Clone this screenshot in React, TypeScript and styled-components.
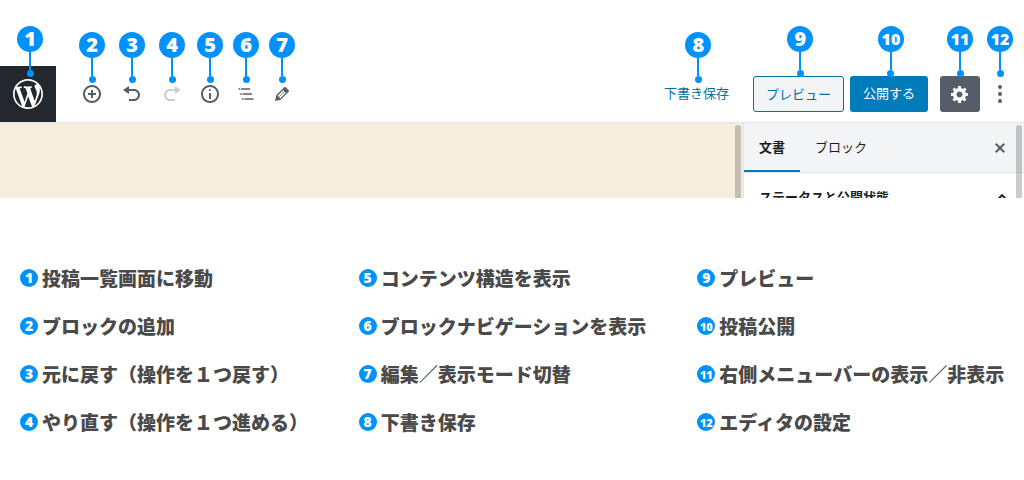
import React from "react";
import styled, { createGlobalStyle, css } from "styled-components";

const color = {
  pin: "#0092fa",
  ink: "#4a4a4a",
  dark: "#23282e",
  icon: "#555d66",
  line: "#e2e4e7",
  link: "#0071a1",
  primary: "#007cba",
  canvas: "#f5eedf",
  panel: "#f3f4f6",
};

const GlobalStyle = createGlobalStyle`
  *, *::before, *::after { box-sizing: border-box; }
  body {
    margin: 0;
    background: #fff;
    color: #191e23;
    font-family: "Noto Sans CJK JP", sans-serif;
    font-size: 13px;
  }
  button {
    margin: 0;
    padding: 0;
    border: 0;
    background: none;
    color: inherit;
    font: inherit;
    cursor: pointer;
  }
`;

const Editor = styled.section`
  padding-top: 66px;
`;

const Toolbar = styled.header`
  display: flex;
  align-items: center;
  height: 57px;
  padding-right: 4px;
  border-bottom: 1px solid ${color.line};
`;

const Tools = styled.div`
  display: flex;
  padding-left: 16px;
`;

const Actions = styled.div`
  display: flex;
  gap: 6px;
  margin-left: auto;
`;

const Settings = styled.div`
  display: flex;
  margin-left: 12px;
`;

const Marked = styled.div`
  position: relative;
  display: flex;
`;

const Pin = styled.span<{ $top: number; $wide?: boolean }>`
  position: absolute;
  z-index: 1;
  top: ${(p) => p.$top}px;
  left: calc(50% + ${(p) => (p.$wide ? 2 : 0)}px);
  transform: translateX(-50%);
  display: flex;
  flex-direction: column;
  align-items: center;
  pointer-events: none;
`;

const Stem = styled.span`
  width: 2px;
  height: 18px;
  background: ${color.pin};
`;

const Dot = styled.span`
  width: 7px;
  height: 7px;
  border-radius: 50%;
  background: ${color.pin};
`;

const Disc = styled.span<{ $size: number; $font: number }>`
  display: flex;
  flex: none;
  align-items: center;
  justify-content: center;
  width: ${(p) => p.$size}px;
  height: ${(p) => p.$size}px;
  border-radius: 50%;
  background: ${color.pin};
  color: #fff;
  font-family: "Open Sans", sans-serif;
  font-size: ${(p) => p.$font}px;
  font-weight: 800;
  line-height: 1;
`;

const HomeButton = styled.button`
  display: flex;
  align-items: center;
  justify-content: center;
  width: 56px;
  height: 56px;
  background: ${color.dark};
  color: #fff;
`;

const ToolButton = styled.button<{ $width: number; $solid?: boolean }>`
  display: flex;
  align-items: center;
  justify-content: center;
  width: ${(p) => p.$width}px;
  height: 36px;
  border-radius: 3px;
  color: ${(p) => (p.$solid ? "#fff" : color.icon)};
  background: ${(p) => (p.$solid ? color.icon : "transparent")};
  &:disabled {
    color: #cbcdd0;
  }
`;

const TextButton = styled.button<{ $kind: "link" | "outline" | "primary" }>`
  height: 36px;
  border-radius: 3px;
  line-height: 20px;
  white-space: nowrap;
  ${(p) =>
    p.$kind === "link" &&
    css`
      padding: 0 18px 2px;
      color: ${color.link};
    `}
  ${(p) =>
    p.$kind === "outline" &&
    css`
      padding: 0 12px;
      border: 1px solid ${color.link};
      background: ${color.panel};
      color: ${color.link};
    `}
  ${(p) =>
    p.$kind === "primary" &&
    css`
      padding: 0 13px 2px;
      background: ${color.primary};
      color: #fff;
    `}
`;

const Workspace = styled.div`
  display: flex;
  height: 75px;
  overflow: hidden;
`;

const Canvas = styled.main`
  display: flex;
  flex: 1;
  justify-content: flex-end;
  padding: 2px 2px 0 0;
  background: ${color.canvas};
`;

const Thumb = styled.span`
  width: 6px;
  border-radius: 3px 3px 0 0;
  background: #c4bfb2;
`;

const Sidebar = styled.aside`
  position: relative;
  width: 281px;
  border-left: 1px solid ${color.line};
  background: #fff;
`;

const SidebarThumb = styled.span`
  position: absolute;
  top: 2px;
  right: 2px;
  bottom: 0;
  width: 6px;
  border-radius: 3px 3px 0 0;
  background: rgba(0, 0, 0, 0.2);
`;

const Tabs = styled.div`
  display: flex;
  height: 50px;
  padding-right: 14px;
  border-bottom: 1px solid ${color.line};
  background: ${color.panel};
`;

const Tab = styled.button<{ $active?: boolean }>`
  height: 49px;
  padding: 0 15px 2px;
  font-weight: ${(p) => (p.$active ? 700 : 400)};
  box-shadow: ${(p) => (p.$active ? `inset 0 -2px ${color.primary}` : "none")};
`;

const CloseButton = styled.button`
  display: flex;
  align-items: center;
  margin-left: auto;
  color: ${color.icon};
`;

const PanelToggle = styled.button`
  display: flex;
  align-items: center;
  justify-content: space-between;
  width: 100%;
  padding: 14px 12px 14px 15px;
  font-weight: 700;
  line-height: 20px;
`;

const Legend = styled.ol`
  display: grid;
  grid-template-columns: repeat(3, 1fr);
  grid-template-rows: repeat(4, 28px);
  grid-auto-flow: column;
  gap: 20px;
  margin: 0;
  padding: 66px 8px 42px 20px;
  list-style: none;
`;

const LegendItem = styled.li`
  display: flex;
  align-items: center;
  gap: 4px;
  color: ${color.ink};
  font-size: 19px;
  font-weight: 900;
  line-height: 28px;
  white-space: nowrap;
`;

const icons = {
  wordpress:
    "M20 10c0-5.51-4.49-10-10-10C4.48 0 0 4.49 0 10c0 5.52 4.48 10 10 10 5.51 0 10-4.48 10-10zM7.78 15.37L4.37 6.22c.55-.02 1.17-.08 1.17-.08.5-.06.44-1.13-.06-1.11 0 0-1.45.11-2.37.11-.18 0-.37 0-.58-.01C4.12 2.69 6.87 1.11 10 1.11c2.33 0 4.45.87 6.05 2.34-.68-.11-1.65.39-1.65 1.58 0 .74.45 1.36.9 2.1.35.61.55 1.36.55 2.46 0 1.49-1.4 5-1.4 5l-3.03-8.37c.54-.02.82-.17.82-.17.5-.05.44-1.25-.06-1.22 0 0-1.44.12-2.38.12-.87 0-2.33-.12-2.33-.12-.5-.03-.56 1.2-.06 1.22l.92.08 1.26 3.41zM17.41 10c.24-.64.74-1.87.43-4.25.7 1.29 1.05 2.71 1.05 4.25 0 3.29-1.73 6.24-4.4 7.78.97-2.59 1.94-5.2 2.92-7.78zM6.1 18.09C3.12 16.65 1.11 13.53 1.11 10c0-1.3.23-2.48.72-3.59C3.25 10.3 4.67 14.2 6.1 18.09zm4.03-6.63l2.58 6.98c-.86.29-1.76.45-2.71.45-.79 0-1.57-.11-2.29-.33.81-2.38 1.62-4.74 2.42-7.1z",
  insert:
    "M10 1c-5 0-9 4-9 9s4 9 9 9 9-4 9-9-4-9-9-9zm0 16c-3.9 0-7-3.1-7-7s3.1-7 7-7 7 3.1 7 7-3.1 7-7 7zm1-11H9v3H6v2h3v3h2v-3h3V9h-3V6z",
  undo: "M12 5H7V2L1 6l6 4V7h5c2.2 0 4 1.8 4 4s-1.8 4-4 4H7v2h5c3.3 0 6-2.7 6-6s-2.7-6-6-6z",
  redo: "M8 5h5V2l6 4-6 4V7H8c-2.2 0-4 1.8-4 4s1.8 4 4 4h5v2H8c-3.3 0-6-2.7-6-6s2.7-6 6-6z",
  info: "M9 15h2V9H9v6zm1-10c-.5 0-1 .5-1 1s.5 1 1 1 1-.5 1-1-.5-1-1-1zm0-4c-5 0-9 4-9 9s4 9 9 9 9-4 9-9-4-9-9-9zm0 16c-3.9 0-7-3.1-7-7s3.1-7 7-7 7 3.1 7 7-3.1 7-7 7z",
  outline: "M5 5H3v2h2V5zm3 8h11v-2H8v2zm9-8H6v2h11V5zM7 11H5v2h2v-2zm0 8h2v-2H7v2zm3-2v2h11v-2H10z",
  edit: "M13.89 3.39l2.71 2.72c.46.46.42 1.24.03 1.64l-8.01 8.02-5.56 1.16 1.16-5.58s7.6-7.63 7.99-8.03c.39-.39 1.22-.39 1.68.07zm-2.73 2.79l-5.59 5.61 1.11 1.11 5.54-5.65zm-2.97 8.23l5.58-5.6-1.07-1.08-5.59 5.6z",
  gear: "M18 12h-2.18c-.17.7-.44 1.35-.81 1.93l1.54 1.54-2.1 2.1-1.54-1.54c-.58.36-1.23.63-1.91.79V19H8v-2.18c-.68-.16-1.33-.43-1.91-.79l-1.54 1.54-2.12-2.12 1.54-1.54c-.36-.58-.63-1.23-.79-1.91H1V9.03h2.17c.16-.7.44-1.35.8-1.94L2.43 5.55l2.1-2.1 1.54 1.54c.58-.37 1.24-.64 1.93-.81V2h3v2.18c.68.16 1.33.43 1.91.79l1.54-1.54 2.12 2.12-1.54 1.54c.36.59.64 1.24.8 1.94H18V12zm-8.5 1.5c1.66 0 3-1.34 3-3s-1.34-3-3-3-3 1.34-3 3 1.34 3 3 3z",
  more: "M10 1a2 2 0 1 0 0 4 2 2 0 0 0 0-4zm0 7a2 2 0 1 0 0 4 2 2 0 0 0 0-4zm0 7a2 2 0 1 0 0 4 2 2 0 0 0 0-4z",
  close:
    "M14.95 6.46L11.41 10l3.54 3.54-1.41 1.41L10 11.42l-3.53 3.53-1.42-1.42L8.58 10 5.05 6.47l1.42-1.42L10 8.58l3.54-3.53z",
  chevron: "M10 6.8l-4.6 4.6L6.8 12.8 10 9.6l3.2 3.2 1.4-1.4z",
};

function Icon({ name, box = 20, size = 20 }: { name: keyof typeof icons; box?: number; size?: number }) {
  return (
    <svg width={size} height={size} viewBox={`0 0 ${box} ${box}`} fill="currentColor" aria-hidden="true">
      <path d={icons[name]} />
    </svg>
  );
}

function Marker({ n, top, wide }: { n: number; top: number; wide?: boolean }) {
  return (
    <Pin $top={top} $wide={wide}>
      <Disc $size={26} $font={n > 9 ? 16 : 20}>
        {n}
      </Disc>
      <Stem />
      <Dot />
    </Pin>
  );
}

const tools: { name: keyof typeof icons; label: string; width: number; box?: number; disabled?: boolean }[] = [
  { name: "insert", label: "ブロックの追加", width: 40 },
  { name: "undo", label: "元に戻す", width: 40 },
  { name: "redo", label: "やり直す", width: 40, disabled: true },
  { name: "info", label: "コンテンツ構造", width: 36 },
  { name: "outline", label: "ブロックナビゲーション", width: 36, box: 24 },
  { name: "edit", label: "モード切替", width: 36 },
];

const legend = [
  "投稿一覧画面に移動",
  "ブロックの追加",
  "元に戻す（操作を１つ戻す）",
  "やり直す（操作を１つ進める）",
  "コンテンツ構造を表示",
  "ブロックナビゲーションを表示",
  "編集／表示モード切替",
  "下書き保存",
  "プレビュー",
  "投稿公開",
  "右側メニューバーの表示／非表示",
  "エディタの設定",
];

export default function App() {
  return (
    <>
      <GlobalStyle />
      <Editor lang="ja">
        <Toolbar>
          <Marked>
            <HomeButton aria-label="投稿一覧">
              <Icon name="wordpress" size={30} />
            </HomeButton>
            <Marker n={1} top={-40} wide />
          </Marked>
          <Tools>
            {tools.map((t, i) => (
              <Marked key={t.name}>
                <ToolButton $width={t.width} aria-label={t.label} disabled={t.disabled}>
                  <Icon name={t.name} box={t.box} />
                </ToolButton>
                <Marker n={i + 2} top={-44} />
              </Marked>
            ))}
          </Tools>
          <Actions>
            <Marked>
              <TextButton $kind="link">下書き保存</TextButton>
              <Marker n={8} top={-44} wide />
            </Marked>
            <Marked>
              <TextButton $kind="outline">プレビュー</TextButton>
              <Marker n={9} top={-50} wide />
            </Marked>
            <Marked>
              <TextButton $kind="primary">公開する</TextButton>
              <Marker n={10} top={-50} wide />
            </Marked>
          </Actions>
          <Settings>
            <Marked>
              <ToolButton $width={40} $solid aria-label="設定">
                <Icon name="gear" />
              </ToolButton>
              <Marker n={11} top={-50} />
            </Marked>
            <Marked>
              <ToolButton $width={40} aria-label="エディタの設定">
                <Icon name="more" />
              </ToolButton>
              <Marker n={12} top={-50} />
            </Marked>
          </Settings>
        </Toolbar>
        <Workspace>
          <Canvas>
            <Thumb />
          </Canvas>
          <Sidebar>
            <Tabs>
              <Tab $active>文書</Tab>
              <Tab>ブロック</Tab>
              <CloseButton aria-label="閉じる">
                <Icon name="close" />
              </CloseButton>
            </Tabs>
            <PanelToggle aria-expanded="true">
              ステータスと公開状態
              <Icon name="chevron" />
            </PanelToggle>
            <SidebarThumb />
          </Sidebar>
        </Workspace>
      </Editor>
      <Legend lang="ja">
        {legend.map((text, i) => (
          <LegendItem key={text}>
            <Disc $size={18} $font={i > 8 ? 11 : 14}>
              {i + 1}
            </Disc>
            {text}
          </LegendItem>
        ))}
      </Legend>
    </>
  );
}
